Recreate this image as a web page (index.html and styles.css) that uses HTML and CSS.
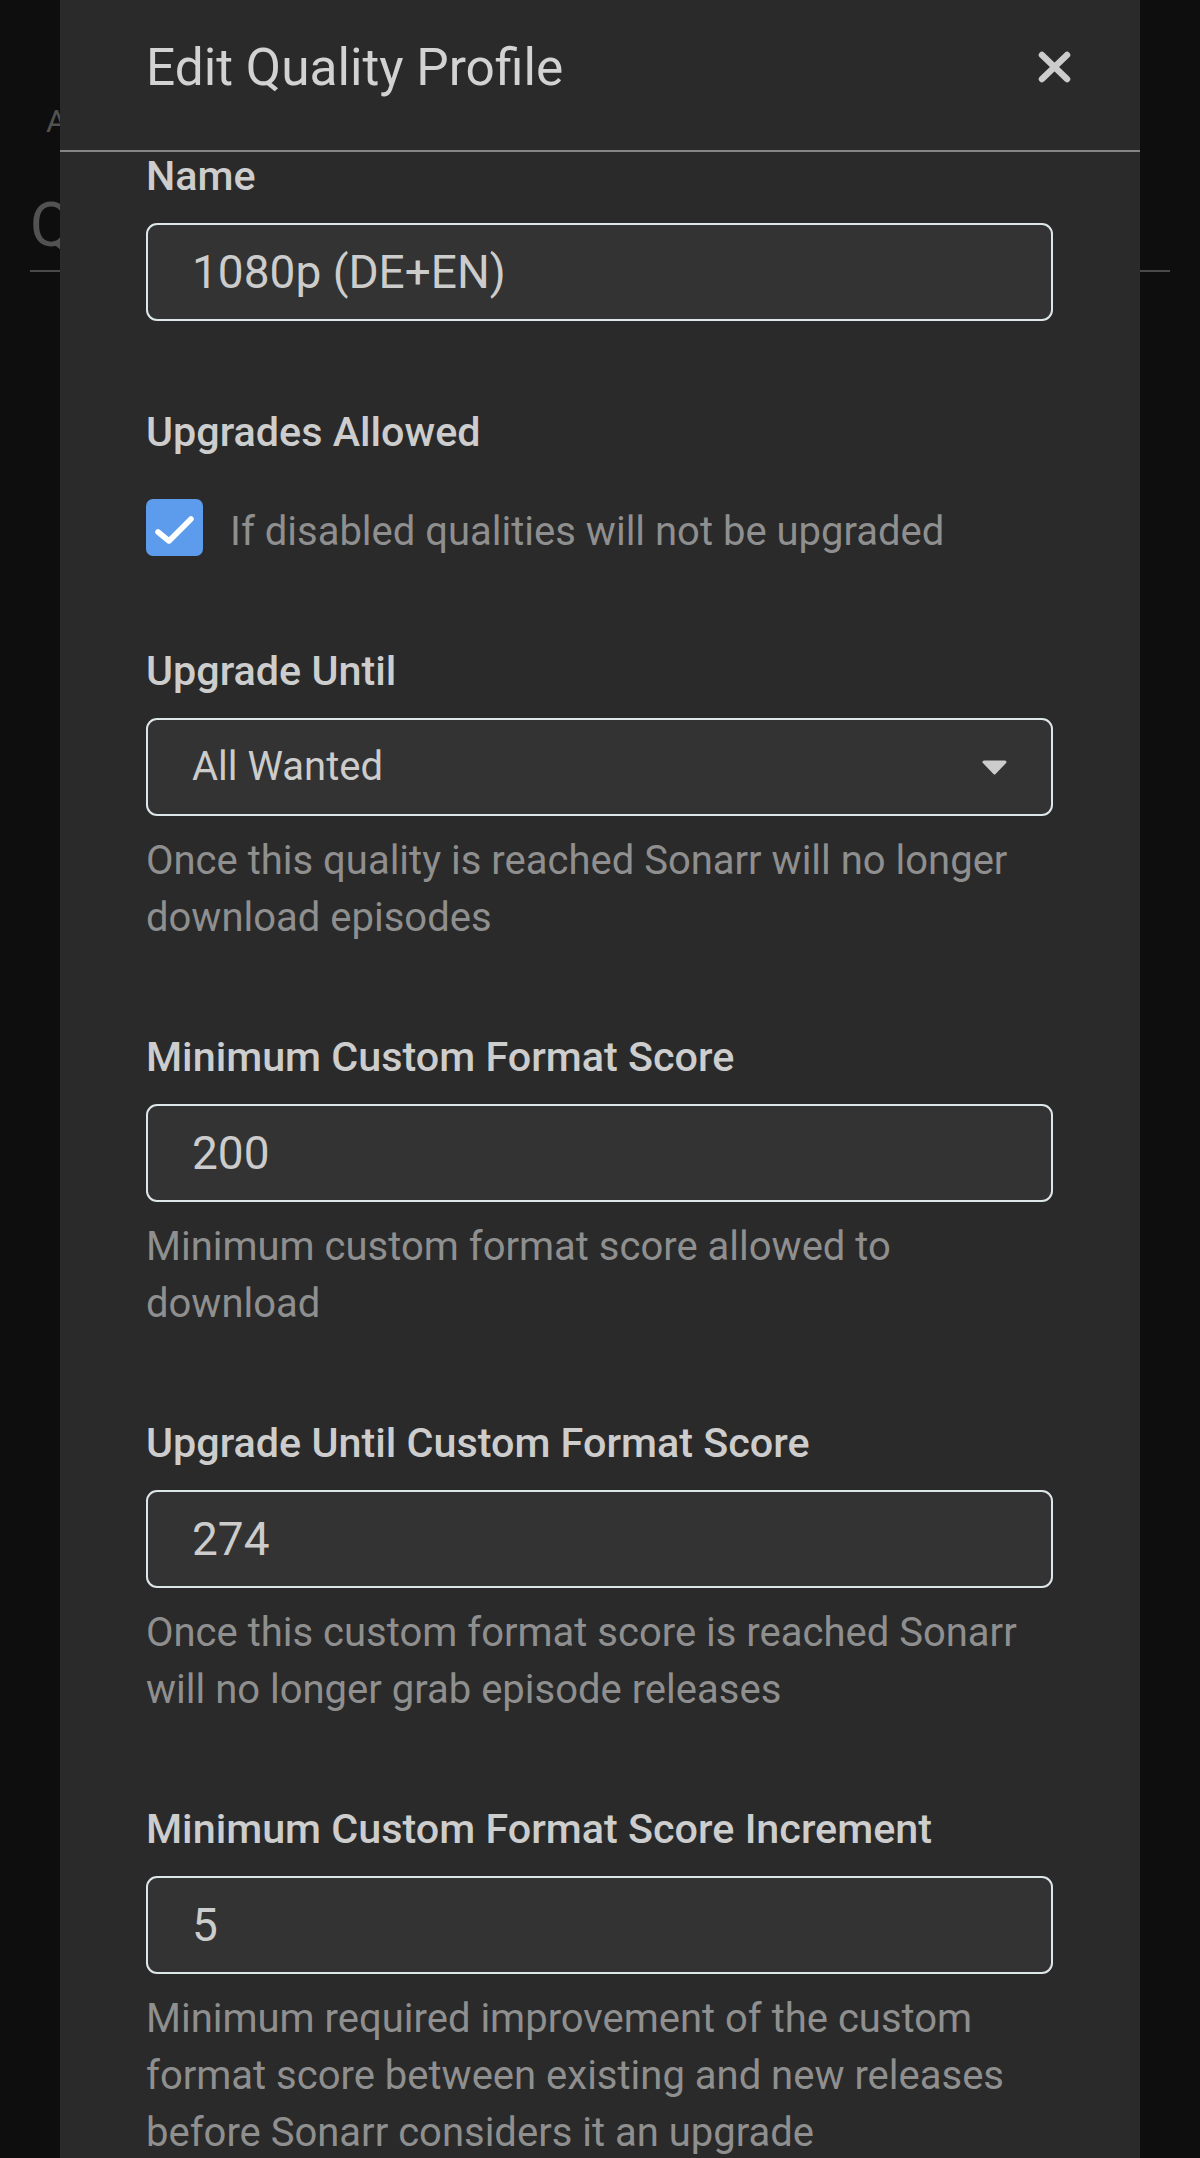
FILE: index.html
```html
<!DOCTYPE html>
<html lang="en">
<head>
<meta charset="utf-8">
<title>Edit Quality Profile</title>
<link rel="stylesheet" href="styles.css">
</head>
<body>
<div class="page">
  <div class="crumb">A</div>
  <h1 class="page-title">Q</h1>
</div>

<div class="modal">
  <div class="modal-header">
    <div class="modal-title">Edit Quality Profile</div>
    <button class="close" aria-label="Close">
      <svg width="33" height="32" viewBox="0 0 33 32"><path d="M4 4 L29 28 M29 4 L4 28" stroke="#cccccc" stroke-width="6.5" stroke-linecap="round" fill="none"/></svg>
    </button>
  </div>
  <div class="modal-body">
    <div class="group">
      <div class="label">Name</div>
      <div class="input">1080p (DE+EN)</div>
    </div>

    <div class="group">
      <div class="label">Upgrades Allowed</div>
      <div class="check-row">
        <span class="checkbox">
          <svg width="57" height="57" viewBox="0 0 57 57"><path d="M12 33 L23 42 L45 20" stroke="#ffffff" stroke-width="5.5" stroke-linecap="round" stroke-linejoin="round" fill="none"/></svg>
        </span>
        <span class="check-text">If disabled qualities will not be upgraded</span>
      </div>
    </div>

    <div class="group">
      <div class="label">Upgrade Until</div>
      <div class="input select">
        <span>All Wanted</span>
        <svg class="caret" width="27" height="17" viewBox="0 0 27 17"><polygon points="3,3 24,3 13.5,14" fill="#cccccc" stroke="#cccccc" stroke-width="3" stroke-linejoin="round"/></svg>
      </div>
      <div class="help">Once this quality is reached Sonarr will no longer download episodes</div>
    </div>

    <div class="group">
      <div class="label">Minimum Custom Format Score</div>
      <div class="input">200</div>
      <div class="help">Minimum custom format score allowed to download</div>
    </div>

    <div class="group">
      <div class="label">Upgrade Until Custom Format Score</div>
      <div class="input">274</div>
      <div class="help">Once this custom format score is reached Sonarr will no longer grab episode releases</div>
    </div>

    <div class="group">
      <div class="label">Minimum Custom Format Score Increment</div>
      <div class="input">5</div>
      <div class="help">Minimum required improvement of the custom format score between existing and new releases before Sonarr considers it an upgrade</div>
    </div>
  </div>
</div>
</body>
</html>
```

FILE: styles.css
```css
* { box-sizing: border-box; }

html, body {
  margin: 0;
  padding: 0;
}

body {
  width: 1200px;
  height: 2158px;
  background: #0e0e0e;
  font-family: Roboto, "Noto Sans", "Liberation Sans", sans-serif;
  position: relative;
  overflow: hidden;
}

/* dimmed page behind the modal */
.page {
  padding: 101px 30px 0 30px;
  color: #525252;
}

.crumb {
  margin-left: 16px;
  font-size: 32px;
  line-height: 40px;
}

.page-title {
  margin: 48px 0 0 0;
  font-size: 62px;
  line-height: 72px;
  font-weight: 400;
  padding-bottom: 9px;
  border-bottom: 2px solid #4a4a4a;
}

/* modal overlay */
.modal {
  position: absolute;
  top: 0;
  left: 60px;
  width: 1080px;
  height: 2158px;
  background: #2a2a2a;
  overflow: hidden;
}

.modal-header {
  height: 152px;
  padding: 37px 69px 0 86px;
  border-bottom: 2px solid #858585;
  display: flex;
  justify-content: space-between;
  align-items: flex-start;
}

.modal-title {
  font-size: 51.4px;
  line-height: 62px;
  color: #d2d2d2;
}

.close {
  margin-top: 14px;
  width: 33px;
  height: 32px;
  padding: 0;
  border: 0;
  background: none;
  display: block;
}

.close svg { display: block; }

.modal-body {
  padding: 0 87px 0 86px;
}

.group {
  margin-bottom: 87px;
}

.label {
  font-size: 41.3px;
  line-height: 48px;
  font-weight: 500;
  color: #cdcdcd;
  margin-bottom: 23px;
}

.input {
  height: 98px;
  border: 2px solid #dde6e9;
  border-radius: 11px;
  background: #333333;
  padding: 0 44px;
  font-size: 46px;
  line-height: 94px;
  color: #cccccc;
  white-space: nowrap;
}

.select {
  display: flex;
  justify-content: space-between;
  align-items: center;
  font-size: 40px;
  padding-right: 43px;
}

.caret { display: block; }

.help {
  margin-top: 16px;
  font-size: 40px;
  line-height: 57px;
  color: #8f8f8f;
}

.check-row {
  display: flex;
  align-items: flex-start;
  padding-top: 20px;
}

.checkbox {
  width: 57px;
  height: 57px;
  border-radius: 7px;
  background: #5d9cec;
  flex: none;
}

.checkbox svg { display: block; }

.check-text {
  margin-left: 27px;
  padding-top: 4px;
  font-size: 40px;
  line-height: 57px;
  color: #8f8f8f;
}
```
